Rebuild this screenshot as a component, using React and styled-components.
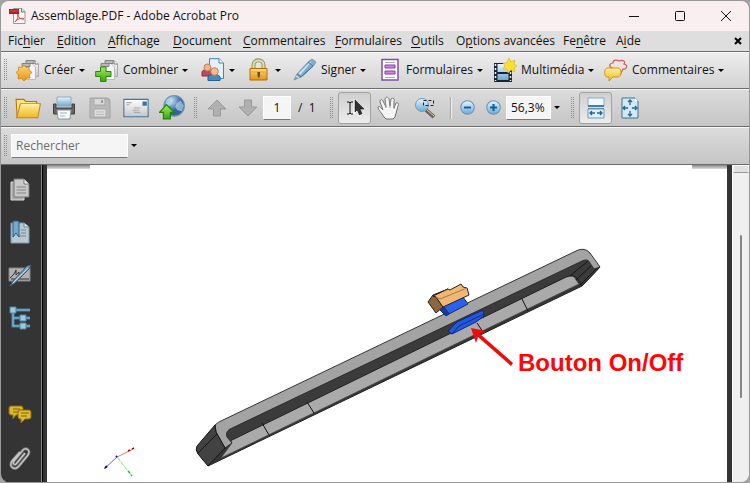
import React, { useState } from 'react';
import styled, { createGlobalStyle } from 'styled-components';

const GlobalStyle = createGlobalStyle`
  * {
    box-sizing: border-box;
  }

  body {
    margin: 0;
    background: #a3a2a4;
    color: #111;
    font: 12px/16px 'Open Sans', 'Noto Sans', sans-serif;
  }

  button, input {
    font: inherit;
    color: inherit;
  }
`;

const Window = styled.div`
  display: flex;
  flex-direction: column;
  height: 100vh;
  overflow: hidden;
  border: 1px solid #98979a;
  border-radius: 9px;
  background: #ccc;
`;

const TitleBar = styled.header`
  display: flex;
  align-items: center;
  flex: 0 0 30px;
  padding-left: 8px;
  gap: 5px;
  background: #f9eff1;
`;

const Title = styled.h1`
  flex: 1;
  margin: 0;
  font-size: 12px;
  font-weight: 400;
  white-space: nowrap;
`;

const WindowControls = styled.div`
  display: flex;
`;

const WindowButton = styled.button`
  display: flex;
  align-items: center;
  justify-content: center;
  width: 46px;
  height: 30px;
  padding: 0;
  border: 0;
  background: none;
`;

const MenuBar = styled.nav`
  display: flex;
  align-items: center;
  flex: 0 0 20px;
  padding: 0 7px 1px;
  gap: 14px;
  background: #dedede;
  white-space: nowrap;
`;

const MenuItem = styled.button`
  padding: 0;
  border: 0;
  background: none;
  text-align: left;
  flex: 0 0 ${({ $width }) => $width}px;
  width: ${({ $width }) => $width}px;

  u {
    text-underline-offset: 2px;
  }
`;

const CloseDocument = styled.button`
  display: flex;
  margin-left: auto;
  padding: 0;
  border: 0;
  background: none;
`;

const Toolbar = styled.div`
  display: flex;
  align-items: center;
  flex: 0 0 ${({ $height }) => $height}px;
  padding-left: 3px;
  border-top: 1px solid #6c6c6c;
  box-shadow: inset 0 1px #f8f8f8;
  background: linear-gradient(${({ $from }) => $from}, ${({ $to }) => $to});
  white-space: nowrap;
`;

const Grip = styled.span`
  flex: 0 0 4px;
  height: 22px;
  background: conic-gradient(transparent 75%, #8a8a8a 0) 0 0 / 2px 2px;
  margin: 0 ${({ $after }) => $after}px 0 ${({ $before = 0 }) => $before}px;
`;

const TaskButton = styled.button`
  display: flex;
  align-items: center;
  gap: 4px;
  flex: 0 0 ${({ $width }) => $width}px;
  padding: 0;
  border: 0;
  background: none;
`;

const Caret = styled.span`
  border: 3px solid transparent;
  border-top-color: #000;
  border-bottom: 0;
`;

const ToolButton = styled.button`
  display: flex;
  align-items: center;
  justify-content: center;
  flex: 0 0 ${({ $width = 36 }) => $width}px;
  height: 32px;
  padding: 0;
  border: 0;
  background: none;
`;

const ToggleButton = styled(ToolButton)`
  flex-basis: 33px;
  border: 1px solid #a2a2a2;
  border-radius: 3px;
  background: linear-gradient(#cfcfcf, #ececec);
`;

const Field = styled.input`
  width: ${({ $width }) => $width}px;
  height: 24px;
  padding: 0 4px;
  border: 1px solid #fff;
  border-bottom-color: #777;
  border-radius: 0;
  background: #f5f5f5;
  text-align: ${({ $align = 'left' }) => $align};
  outline: 0;

  &::placeholder {
    color: #6d6d6d;
    opacity: 1;
  }
`;

const PageCount = styled.span`
  width: 39px;
  padding-left: 7px;
  white-space: pre;
`;

const Divider = styled.span`
  width: 2px;
  height: 22px;
  margin: 0 2px 0 7px;
  border-left: 1px solid #aaa;
  border-right: 1px solid #eee;
`;

const DropButton = styled.button`
  display: flex;
  justify-content: center;
  width: 12px;
  padding: 4px 0;
  border: 0;
  background: none;
`;

const Workspace = styled.div`
  display: flex;
  flex: 1;
  min-height: 0;
  border-top: 1px solid #6c6c6c;
`;

const Sidebar = styled.aside`
  position: relative;
  z-index: 1;
  display: flex;
  flex-direction: column;
  gap: 19px;
  flex: 0 0 41px;
  padding: 12px 0 12px 6px;
  border-right: 1px solid #858585;
  box-shadow: 1px 0 #000;
  background: #343434;
`;

const PanelButton = styled.button`
  display: flex;
  align-items: center;
  justify-content: center;
  width: 26px;
  height: 24px;
  padding: 0;
  border: 0;
  background: none;
`;

const SidebarSpace = styled.div`
  flex: 1;
`;

const Page = styled.main`
  position: relative;
  flex: 1;
  min-width: 0;
  border: solid #343434;
  border-width: 0 5px;
  background: #fff;
`;

const PageEdge = styled.div`
  display: flex;
  justify-content: space-between;
  height: 4px;

  &::before,
  &::after {
    content: '';
    width: 43px;
    background: linear-gradient(#858585, #ddd);
  }

  &::after {
    width: 35px;
  }
`;

const Drawing = styled.svg`
  position: absolute;
  top: 0;
  left: 0;
  width: 680px;
  height: 317px;
`;

const ScrollBar = styled.div`
  display: flex;
  flex-direction: column;
  align-items: center;
  flex: 0 0 17px;
  border-left: 1px solid #fff;
  background: #f0f0f0;
`;

const ScrollSplit = styled.div`
  width: 100%;
  height: 8px;
  margin-bottom: 62px;
  border: 1px solid #f8f8f8;
  border-bottom-color: #999;
  background: #e1e1e1;
`;

const ScrollThumb = styled.div`
  width: 2px;
  height: 163px;
  border-radius: 1px;
  background: #858585;
`;

const IconSvg = styled.svg`
  flex-shrink: 0;
`;

const HiddenSvg = styled.svg`
  position: absolute;
`;

const Icon = ({ size = 24, children }) => (
  <IconSvg width={size} height={size} viewBox="0 0 24 24" fill="none">
    {children}
  </IconSvg>
);

const Gradients = () => (
  <HiddenSvg width="0" height="0">
    <defs>
      <linearGradient id="gold" x2="0" y2="1">
        <stop stopColor="#fff0a0" />
        <stop offset="1" stopColor="#efb722" />
      </linearGradient>
      <linearGradient id="orange" x2="0" y2="1">
        <stop stopColor="#ffd97c" />
        <stop offset="1" stopColor="#e89213" />
      </linearGradient>
      <linearGradient id="blue" x2="0" y2="1">
        <stop stopColor="#e9f6ff" />
        <stop offset="1" stopColor="#6aa9d2" />
      </linearGradient>
      <linearGradient id="green" x2="0" y2="1">
        <stop stopColor="#a5ee63" />
        <stop offset="1" stopColor="#39a50b" />
      </linearGradient>
      <linearGradient id="silver" x2="0" y2="1">
        <stop stopColor="#fff" />
        <stop offset="1" stopColor="#c6c6c6" />
      </linearGradient>
      <radialGradient id="globe" cx=".35" cy=".25">
        <stop stopColor="#c9e4fa" />
        <stop offset="1" stopColor="#2f6598" />
      </radialGradient>
    </defs>
  </HiddenSvg>
);

const PdfIcon = () => (
  <svg width="17" height="18" viewBox="0 0 17 18" fill="none">
    <path d="M4.500 1.500H13L16 4.500V16.500H4.500Z" fill="#f8f8f8" stroke="#999" />
    <path d="M12.500 1.500V5H16" stroke="#777" fill="#ddd" />
    <path d="M0 2H10V7H0Z" fill="#b8191c" />
    <path d="M1 4H9" stroke="#d65c58" />
    <path d="M6 15C8 13 10 9 9 7C7 8 11 13 15 12C12 10 7 13 6 15Z" stroke="#d54a43" />
  </svg>
);

const Papers = () => (
  <>
    <path d="M12.500 2.500H19L22.500 6V18.500H12.500Z" fill="url(#silver)" stroke="#aaa" />
    <path d="M8.500 5.500H16L19.500 9V21.500H8.500Z" fill="#f4f4f4" stroke="#bbb" />
    <path d="M6 5.500H14V8.500H6ZM10 2.500H18V5.500H10Z" fill="#b9b9b9" stroke="#848484" />
    <path d="M19 2.500V6H22.500" stroke="#777" fill="#fff" />
  </>
);

const CreateIcon = () => (
  <Icon>
    <Papers />
    <path d="M8 7L10 9.500L13 9L13 12L16 14.500L13.500 16.500L14 20L11 20L8 23L5.500 20.500L2 21L2.500 17L0 14.500L2.500 12.500L2.500 9L6 9.500Z" fill="url(#orange)" stroke="#d18413" strokeWidth=".8" />
  </Icon>
);

const CombineIcon = () => (
  <Icon>
    <Papers />
    <path d="M5.500 9H11V13.500H16V18.500H11V23.500H5.500V18.500H.7V13.500H5.500Z" fill="url(#green)" stroke="#2c850e" />
  </Icon>
);

const PeopleIcon = () => (
  <Icon>
    <path d="M8.500 .7H18L22.500 5V20.500H8.500Z" fill="#e5f1f9" stroke="#4286b0" />
    <path d="M18 .7V5H22.500" fill="#fff" stroke="#4286b0" />
    <path d="M1 18V14C1 11 11 11 12 14V18Z" fill="#b64a64" stroke="#8b2b42" />
    <circle cx="6.500" cy="9.500" r="3.500" fill="#efb681" stroke="#b98057" />
    <path d="M7 22.500V19C8 15.500 18 15.500 19 19V22.500Z" fill="#448bc0" stroke="#23618f" />
    <circle cx="13.500" cy="13.500" r="3.800" fill="#f5bd84" stroke="#b98057" />
  </Icon>
);

const LockIcon = () => (
  <Icon>
    <path d="M6.500 12V7C6.500 .8 16.500 .8 16.500 7V12" stroke="#999160" strokeWidth="4" />
    <path d="M6.500 12V7C6.500 1 16.500 1 16.500 7V12" stroke="#dfddb9" strokeWidth="2" />
    <path d="M3 10.500H20V22H3Z" fill="url(#orange)" stroke="#a86e0c" />
    <path d="M3 14H20M3 18H20" stroke="#dfa73b" />
    <path d="M10.500 14H13V17L12.500 19.500H11L10.500 17Z" fill="#62511c" />
  </Icon>
);

const PenIcon = () => (
  <Icon>
    <path d="M1 22L4 16L16 3L19 1L23 4L20.500 8L8 19Z" fill="#82acd0" stroke="#6c8799" strokeWidth=".7" />
    <path d="M6 15L17 4L19 3L7 17Z" fill="#d5e9f4" />
    <path d="M8 19L20 8L16 12Z" stroke="#477ba4" />
    <path d="M4 16L8 19M15 4L20 8" stroke="#56738a" />
    <path d="M3 18L6 20" stroke="#e8edef" />
  </Icon>
);

const FormIcon = () => (
  <Icon>
    <path d="M4 1.500H20V22H4Z" fill="#fff" stroke="#8150a2" strokeWidth="1.500" />
    <path d="M7 4.500H17M7 19.500H17" stroke="#aaa" />
    <path d="M7 7H17V10H7ZM7 13H17V16H7Z" fill="#ce87e5" stroke="#873da5" />
  </Icon>
);

const MediaIcon = () => (
  <Icon>
    <path d="M1 5H19V24H1Z" fill="#16252f" />
    <path d="M4.500 6H15.500V14H4.500ZM4.500 16H15.500V22H4.500Z" fill="url(#blue)" />
    <path d="M2.500 6V23M17.500 6V23" stroke="#f5f5f5" strokeWidth="1.500" strokeDasharray="2 2" />
    <path d="M16 0L18 4L22 2L21 6L24 8L21 10L22 14L18 12L15 15L14 11L10 11L12 8L10 5L14 5Z" fill="#ffdf31" stroke="#dfb310" strokeWidth=".6" />
  </Icon>
);

const CommentIcon = () => (
  <Icon>
    <path d="M13 11L8 10C4 8 6 5 9 5C9 1 14 2 15 3C19 1 22 4 20 6C25 7 22 12 19 11L16 17L16 12Z" stroke="#c7625d" strokeWidth="1.200" fill="#eee5e3" />
    <path d="M3 10H14C18 10 18 19 14 19H9L5 23V19H3C0 19 0 10 3 10Z" fill="url(#gold)" stroke="#cd961c" />
  </Icon>
);

const FolderIcon = () => (
  <Icon size={26}>
    <path d="M1 4H8L10 6H20V20H2Z" fill="#ffe378" stroke="#b1780e" />
    <path d="M5 8H23.500L21 21H1.500L5 8Z" fill="url(#gold)" stroke="#c18a1a" />
    <path d="M6 9H22" stroke="#fff7bd" />
  </Icon>
);

const PrintIcon = () => (
  <Icon>
    <path d="M5 1H19V10H5Z" fill="url(#blue)" stroke="#95aab7" />
    <path d="M1.500 8H4V12H20V8H22.500V18H1.500Z" fill="#626568" stroke="#3d3f41" />
    <path d="M5 14H19L18 23H6Z" fill="#fafafa" stroke="#8e9396" />
    <path d="M8 17H15M8 20H13" stroke="#89bad8" />
  </Icon>
);

const SaveIcon = () => (
  <Icon>
    <path d="M2 2H20L22 4V22H2Z" fill="#b8b8b8" stroke="#a2a2a2" />
    <path d="M6 2.500H17V9H6Z" fill="#dadada" stroke="#a8a8a8" />
    <path d="M13 4H15V7H13Z" fill="#999" />
    <path d="M6 13H18V21H6Z" fill="#ddd" stroke="#aaa" />
    <path d="M8 16H16M8 18.500H16" stroke="#bbb" />
  </Icon>
);

const MailIcon = () => (
  <Icon size={26}>
    <path d="M.8 4H23.200V20H.8Z" fill="url(#silver)" stroke="#42779f" />
    <path d="M3 7H8M3 9H6M10 12H16M9 14H15M10 16H16" stroke="#aaa" />
    <path d="M18 6H22V10H18Z" fill="#3875a7" />
  </Icon>
);

const GlobeIcon = () => (
  <Icon size={26}>
    <circle cx="14" cy="10" r="9.500" fill="url(#globe)" stroke="#7292ad" />
    <path d="M7 4L11 2L13 4L11 6L12 8L8 11L6 8ZM16 8L20 5L23 10L21 15L17 14L15 11Z" fill="#b5d3e8" opacity=".7" />
    <path d="M7 9L14 16H10.500V22H4V16H.5Z" fill="url(#green)" stroke="#227e10" />
  </Icon>
);

const ArrowIcon = ({ down }) => (
  <Icon>
    <path d={down ? 'M8.500 4H15.500V11H21L12 20L3 11H8.500Z' : 'M12 4L21 13H15.500V20H8.500V13H3Z'} fill="#b0b0b0" stroke="#999" />
  </Icon>
);

const SelectIcon = () => (
  <Icon>
    <path d="M4 6H6L7 7L8 6H10M7 7V17M4 18H6L7 17L8 18H10" stroke="#111" />
    <path d="M12 4L21 13H17L19 18L16 19L14 14L12 16Z" fill="#333" stroke="#111" strokeWidth=".6" />
    <path d="M11 3V18L14 15L16 20L20 18" stroke="#fff" strokeWidth=".7" />
  </Icon>
);

const HandIcon = () => (
  <Icon>
    <path d="M7 21C5 17 1 14 1 11C2 9 4 12 6 14L3 6C3 3 5 3 6 5L9 11L8 3C9 0 11 1 12 3L13 10L14 3C16 1 18 3 17 5L17 12L19 7C21 6 22 8 21 10L18 21L16 23H9Z" fill="#f5f5f5" stroke="#727272" />
    <path d="M8 6L9 12M13 4V12M17 7V13" stroke="#999" />
  </Icon>
);

const ZoomIcon = () => (
  <Icon>
    <path d="M13 14L21 21" stroke="#6d6256" strokeWidth="4" />
    <path d="M14 14L21 20" stroke="#d9cdb8" />
    <circle cx="9" cy="9" r="6.500" fill="url(#blue)" stroke="#699dbd" />
    <path d="M10.500 4.500H20.500V9.500H10.500Z" stroke="#222" strokeDasharray="3 2" />
  </Icon>
);

const CircleIcon = ({ plus }) => (
  <Icon size={17}>
    <circle cx="12" cy="12" r="9.500" fill="url(#blue)" stroke="#6298b7" strokeWidth="1.500" />
    <path d={plus ? 'M7 12H17M12 7V17' : 'M7 12H17'} stroke="#10629b" strokeWidth="3" />
  </Icon>
);

const FitWidthIcon = () => (
  <Icon>
    <path d="M4 2H20V10H4Z" fill="#f0f8fd" stroke="#8baabe" />
    <path d="M4 10H20M4 13H20" stroke="#28658a" strokeWidth="1.500" />
    <path d="M4 13H20V22H4Z" fill="#dceffb" stroke="#719bb5" />
    <path d="M6 17H11M13 17H18M8 15L6 17L8 19M16 15L18 17L16 19" stroke="#246590" strokeWidth="1.300" />
  </Icon>
);

const FitPageIcon = () => (
  <Icon>
    <path d="M4 2H17L20 5V22H4Z" fill="#d3e9f7" stroke="#416f8f" />
    <path d="M12 4V9M12 15V20M5 12H10M14 12H19M10 6L12 4L14 6M10 18L12 20L14 18M7 10L5 12L7 14M17 10L19 12L17 14" stroke="#286990" strokeWidth="1.300" />
    <path d="M17 2V5H20" fill="#fff" />
  </Icon>
);

const PagesIcon = () => (
  <Icon>
    <path d="M3 5H16V23H3Z" fill="#aaa" stroke="#ddd" />
    <path d="M6 2H16L21 7V20H6Z" fill="#c9c9c9" stroke="#777" />
    <path d="M16 2V7H21" fill="#eee" stroke="#777" />
    <path d="M8.500 10H18M8.500 13H18M8.500 16H18" stroke="#858585" />
  </Icon>
);

const BookmarkIcon = () => (
  <Icon>
    <path d="M3 3H16L21 7V23H3Z" fill="#b7c8d3" stroke="#7899ad" />
    <path d="M16 3V7H21" fill="#e0e5e8" stroke="#6e8796" />
    <path d="M13 10H18M13 13H18M10 16H18" stroke="#7b858b" />
    <path d="M5 1H11V17L8 13L5 17Z" fill="#75a9ca" stroke="#235e87" />
  </Icon>
);

const SignatureIcon = () => (
  <Icon>
    <path d="M1 5H22V18H1Z" fill="#b1b1b1" stroke="#858585" />
    <path d="M2 15L6 11L8 7V12L11 9V12L14 9M3 16H21" stroke="#333" />
    <path d="M2 23L5 18L19 3L23 2L21 6L7 20Z" fill="#7b9db7" stroke="#395d76" />
    <path d="M5 20L20 5" stroke="#c2d6e2" />
  </Icon>
);

const TreeIcon = () => (
  <Icon>
    <path d="M5 5V20H15M5 12H15M8 4H22M17 12H22M17 20H22" stroke="#3f83a9" strokeWidth="3" />
    <path d="M5 5V20H15M5 12H15M8 4H22M17 12H22M17 20H22" stroke="#92c0d6" />
    <path d="M2 1H8V7H2ZM12 9H18V15H12ZM12 17H18V23H12Z" fill="#a6c7d7" stroke="#4689ad" />
  </Icon>
);

const ChatIcon = () => (
  <Icon>
    <path d="M3 3H13Q15 3 15 5V10Q15 12 13 12H8L5 16V12H3Q1 12 1 10V5Q1 3 3 3Z" fill="#dab62c" stroke="#8b6911" />
    <path d="M5 6H12M5 9H10" stroke="#7d651c" />
    <path d="M12 7H21Q23 7 23 9V14Q23 16 21 16H17L13 20V16H12Q10 16 10 14V9Q10 7 12 7Z" fill="#dfbc2d" stroke="#8b6911" />
    <path d="M13 10H21M13 13H19" stroke="#7d651c" />
  </Icon>
);

const ClipIcon = () => (
  <Icon>
    <path d="M17 7L9 17C7 20 4 18 6 15L15 4C18 1 23 4 20 9L11 20C7 25 0 21 4 15L12 6" stroke="#666" strokeWidth="3" />
    <path d="M17 7L9 17C7 20 4 18 6 15L15 4C18 1 23 4 20 9L11 20C7 25 0 21 4 15L12 6" stroke="#c5c5c5" strokeWidth="1.500" />
  </Icon>
);

// [text, accelerator index, width]
const menus = [
  ['Fichier', 3, 35],
  ['Edition', 0, 37],
  ['Affichage', 0, 51],
  ['Document', 0, 56],
  ['Commentaires', 0, 78],
  ['Formulaires', 0, 62],
  ['Outils', 0, 31],
  ['Options avancées', 1, 93],
  ['Fenêtre', 2, 39],
  ['Aide', 1, 24],
];

const tasks = [
  { name: 'Créer', text: true, icon: CreateIcon, width: 79 },
  { name: 'Combiner', text: true, icon: CombineIcon, width: 106 },
  { name: 'Collaborer', icon: PeopleIcon, width: 46 },
  { name: 'Protéger', icon: LockIcon, width: 46 },
  { name: 'Signer', text: true, icon: PenIcon, width: 85 },
  { name: 'Formulaires', text: true, icon: FormIcon, width: 115 },
  { name: 'Multimédia', text: true, icon: MediaIcon, width: 111 },
  { name: 'Commentaires', text: true, icon: CommentIcon, width: 120 },
];

const panels = [
  ['Pages', PagesIcon],
  ['Signets', BookmarkIcon],
  ['Signatures', SignatureIcon],
  ['Arborescence', TreeIcon],
];

const Assembly = () => (
  <Drawing viewBox="47 165 680 317" fill="none" role="img" aria-label="Assemblage, Bouton On/Off">
    <g strokeLinejoin="round">
      <path d="M208 466L582 286L600 267L595 264L222 446Z" fill="#363636" stroke="#222" />
      <path d="M230 439L566 277Q574 274 576 280L579 284L221 458L232 443Z" fill="#aaa" stroke="#444" strokeWidth=".7" />
      <path d="M228 430L582 261Q588 258 592 263L600 267L582 286L577 278Q574 274 566 277L230 441L226 436Z" fill="#3b3b3b" stroke="#222" />
      <path d="M570 276L588 261M576 280L593 264M580 285L598 267" stroke="#161616" />
      <path d="M215 425Q218 422 223 420L574 252Q584 246 590 253L600 267L594 269L590 263Q588 258 582 261L230 429Q225 432 227 437L232 443L225 448L216 432Z" fill="#a3a3a3" stroke="#333" />
      <path d="M215 425L216 432L225 448L208 466L198 454Q195 450 197 446Z" fill="#424242" stroke="#151515" />
      <path d="M217 434L198 453" stroke="#161616" />
      <path d="M262 423L269 435M307 402L314 413M477 323L483 332M522 299L528 311" stroke="#111" />
      <path d="M443 306L463 297L468 304L449 314Z" fill="#2960ed" stroke="#102b79" />
      <path d="M443 306L449 314L446 316L440 310Z" fill="#193b99" stroke="#102b79" />
      <path d="M428 302L433 295L448 289L436 297L443 307L436 313Z" fill="#8d653e" stroke="#292117" />
      <path d="M433 296L448 289L450 290L461 284L463 287L467 288L469 295L443 307L436 297Z" fill="#efb875" stroke="#292117" />
      <path d="M436 297L440 299L467 288" stroke="#a97b49" />
      <path d="M448 331L457 322L483 310L484 316L476 322L452 334Z" fill="#2457dc" stroke="#092b83" />
      <path d="M448 331L452 334L459 326L484 314" stroke="#102f8a" />
    </g>
    <path d="M471 328L486 331L480 334L513 363L511 366L478 337L476 343Z" fill="#f00b0b" />
    <text x="518" y="371" fill="#ff0505" fontFamily="'Liberation Sans', sans-serif" fontSize="24" fontWeight="700">
      Bouton On/Off
    </text>
    <path d="M117 457L133 449" stroke="#df7575" />
    <path d="M128 451L130 450M132 449L134 448" stroke="#b40000" strokeWidth="1.500" />
    <path d="M117 457L104 469" stroke="#6767d0" />
    <path d="M107 466L105 468M116 457L117 456" stroke="#0808a8" strokeWidth="2" />
    <path d="M117 457L132 476" stroke="#73e773" strokeDasharray="5 1" />
    <path d="M128 471L130 473M131 475L132 476" stroke="#20bf20" strokeWidth="1.500" />
  </Drawing>
);

const App = () => {
  const [search, setSearch] = useState('');
  const [page, setPage] = useState('1');
  const [zoom, setZoom] = useState('56,3%');

  return (
    <>
      <GlobalStyle />
      <Gradients />
      <Window>
        <TitleBar>
          <PdfIcon />
          <Title>Assemblage.PDF - Adobe Acrobat Pro</Title>
          <WindowControls>
            <WindowButton aria-label="Réduire">
              <svg width="10" height="10"><path d="M0 5.500H10" stroke="#111" /></svg>
            </WindowButton>
            <WindowButton aria-label="Agrandir">
              <svg width="10" height="10"><rect x=".5" y=".5" width="9" height="9" rx="1" fill="none" stroke="#111" /></svg>
            </WindowButton>
            <WindowButton aria-label="Fermer">
              <svg width="10" height="10"><path d="M0 0L10 10M10 0L0 10" stroke="#111" /></svg>
            </WindowButton>
          </WindowControls>
        </TitleBar>

        <MenuBar>
          {menus.map(([text, index, width]) => (
            <MenuItem key={text} $width={width}>
              {text.slice(0, index)}<u>{text[index]}</u>{text.slice(index + 1)}
            </MenuItem>
          ))}
          <CloseDocument aria-label="Fermer le document">
            <svg width="8" height="8"><path d="M1 1L7 7M7 1L1 7" stroke="#000" strokeWidth="2" /></svg>
          </CloseDocument>
        </MenuBar>

        <Toolbar $height={37} $from="#eee" $to="#d2d2d2">
          <Grip $after={8} />
          {tasks.map(({ name, text, icon: TaskIcon, width }) => (
            <TaskButton key={name} aria-label={name} $width={width}>
              <TaskIcon />
              {text && <span>{name}</span>}
              <Caret />
            </TaskButton>
          ))}
        </Toolbar>

        <Toolbar $height={38} $from="#dcdcdc" $to="#c5c5c5">
          <Grip $after={2} />
          <ToolButton aria-label="Ouvrir"><FolderIcon /></ToolButton>
          <ToolButton aria-label="Imprimer"><PrintIcon /></ToolButton>
          <ToolButton aria-label="Enregistrer"><SaveIcon /></ToolButton>
          <ToolButton aria-label="Courriel"><MailIcon /></ToolButton>
          <ToolButton aria-label="Transférer"><GlobeIcon /></ToolButton>
          <Grip $before={4} $after={3} />
          <ToolButton $width={31} aria-label="Page précédente"><ArrowIcon /></ToolButton>
          <ToolButton $width={31} aria-label="Page suivante"><ArrowIcon down /></ToolButton>
          <Field $width={28} $align="center" aria-label="Page" value={page} onChange={(e) => setPage(e.target.value)} />
          <PageCount>/  1</PageCount>
          <Grip $after={4} />
          <ToggleButton aria-label="Sélection" aria-pressed="true"><SelectIcon /></ToggleButton>
          <ToolButton aria-label="Main"><HandIcon /></ToolButton>
          <ToolButton aria-label="Zoom sur sélection"><ZoomIcon /></ToolButton>
          <Divider />
          <ToolButton $width={26} aria-label="Zoom arrière"><CircleIcon /></ToolButton>
          <ToolButton $width={26} aria-label="Zoom avant"><CircleIcon plus /></ToolButton>
          <Field $width={45} aria-label="Zoom" value={zoom} onChange={(e) => setZoom(e.target.value)} />
          <DropButton aria-label="Choisir le zoom"><Caret /></DropButton>
          <Grip $before={8} $after={4} />
          <ToggleButton aria-label="Pleine largeur" aria-pressed="true"><FitWidthIcon /></ToggleButton>
          <ToolButton aria-label="Page entière"><FitPageIcon /></ToolButton>
        </Toolbar>

        <Toolbar $height={38} $from="#dcdcdc" $to="#c5c5c5">
          <Grip $after={3} />
          <Field $width={117} aria-label="Rechercher" placeholder="Rechercher" value={search} onChange={(e) => setSearch(e.target.value)} />
          <DropButton aria-label="Options de recherche"><Caret /></DropButton>
        </Toolbar>

        <Workspace>
          <Sidebar>
            {panels.map(([name, PanelIcon]) => (
              <PanelButton key={name} aria-label={name}><PanelIcon /></PanelButton>
            ))}
            <SidebarSpace />
            <PanelButton aria-label="Commentaires"><ChatIcon /></PanelButton>
            <PanelButton aria-label="Pièces jointes"><ClipIcon /></PanelButton>
          </Sidebar>
          <Page>
            <PageEdge />
            <Assembly />
          </Page>
          <ScrollBar>
            <ScrollSplit />
            <ScrollThumb />
          </ScrollBar>
        </Workspace>
      </Window>
    </>
  );
};

export default App;
